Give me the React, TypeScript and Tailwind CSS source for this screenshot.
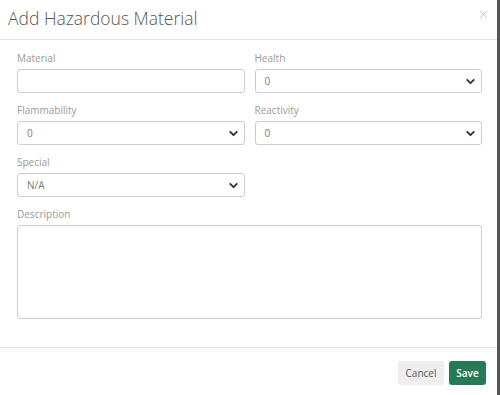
import { ChevronDown, X } from 'lucide-react'

function Label({ children }: { children: string }) {
  return <label className="block text-[10px] leading-[13px] text-[#999] mb-[4px]">{children}</label>
}

function Select({ value }: { value: string }) {
  return (
    <div className="flex h-[24px] items-center justify-between rounded-[3px] border border-[#ccc] bg-white pl-[9px] pr-[4px]">
      <span className="text-[10px] text-[#777]">{value}</span>
      <ChevronDown className="h-[13px] w-[13px] text-[#333]" strokeWidth={3.5} />
    </div>
  )
}

export default function App() {
  return (
    <div className="flex h-[395px] w-[500px] bg-white" style={{ fontFamily: '"Open Sans", sans-serif' }}>
      <div className="flex w-[497px] flex-col bg-white">
        <div className="flex h-[40px] items-start justify-between border-b border-[#e5e5e5] pl-[8px] pr-[7px]">
          <h2 className="mt-[5px] text-[17.5px] font-light text-[#555]">Add Hazardous Material</h2>
          <X className="mt-[8px] h-[13px] w-[13px] text-[#aaa]" strokeWidth={1.25} />
        </div>

        <div className="flex h-[308px] flex-col gap-[11px] border-b border-[#e5e5e5] pl-[17px] pr-[15px] pt-[12px]">
          <div className="grid grid-cols-2 gap-x-[10px] gap-y-[11px]">
            <div>
              <Label>Material</Label>
              <div className="h-[24px] rounded-[3px] border border-[#ccc] bg-white" />
            </div>
            <div>
              <Label>Health</Label>
              <Select value="0" />
            </div>
            <div>
              <Label>Flammability</Label>
              <Select value="0" />
            </div>
            <div>
              <Label>Reactivity</Label>
              <Select value="0" />
            </div>
            <div>
              <Label>Special</Label>
              <Select value="N/A" />
            </div>
          </div>
          <div>
            <Label>Description</Label>
            <div className="h-[94px] rounded-[3px] border border-[#ccc] bg-white" />
          </div>
        </div>

        <div className="flex justify-end gap-[5px] pr-[11px] pt-[13px]">
          <button className="h-[24px] w-[46px] rounded-[3px] bg-[#eee] text-[10px] text-[#555]">Cancel</button>
          <button className="h-[24px] w-[37px] rounded-[3px] bg-[#277a57] text-[10px] font-semibold text-white">Save</button>
        </div>
      </div>
      <div className="w-[3px] bg-[#555]" />
    </div>
  )
}
